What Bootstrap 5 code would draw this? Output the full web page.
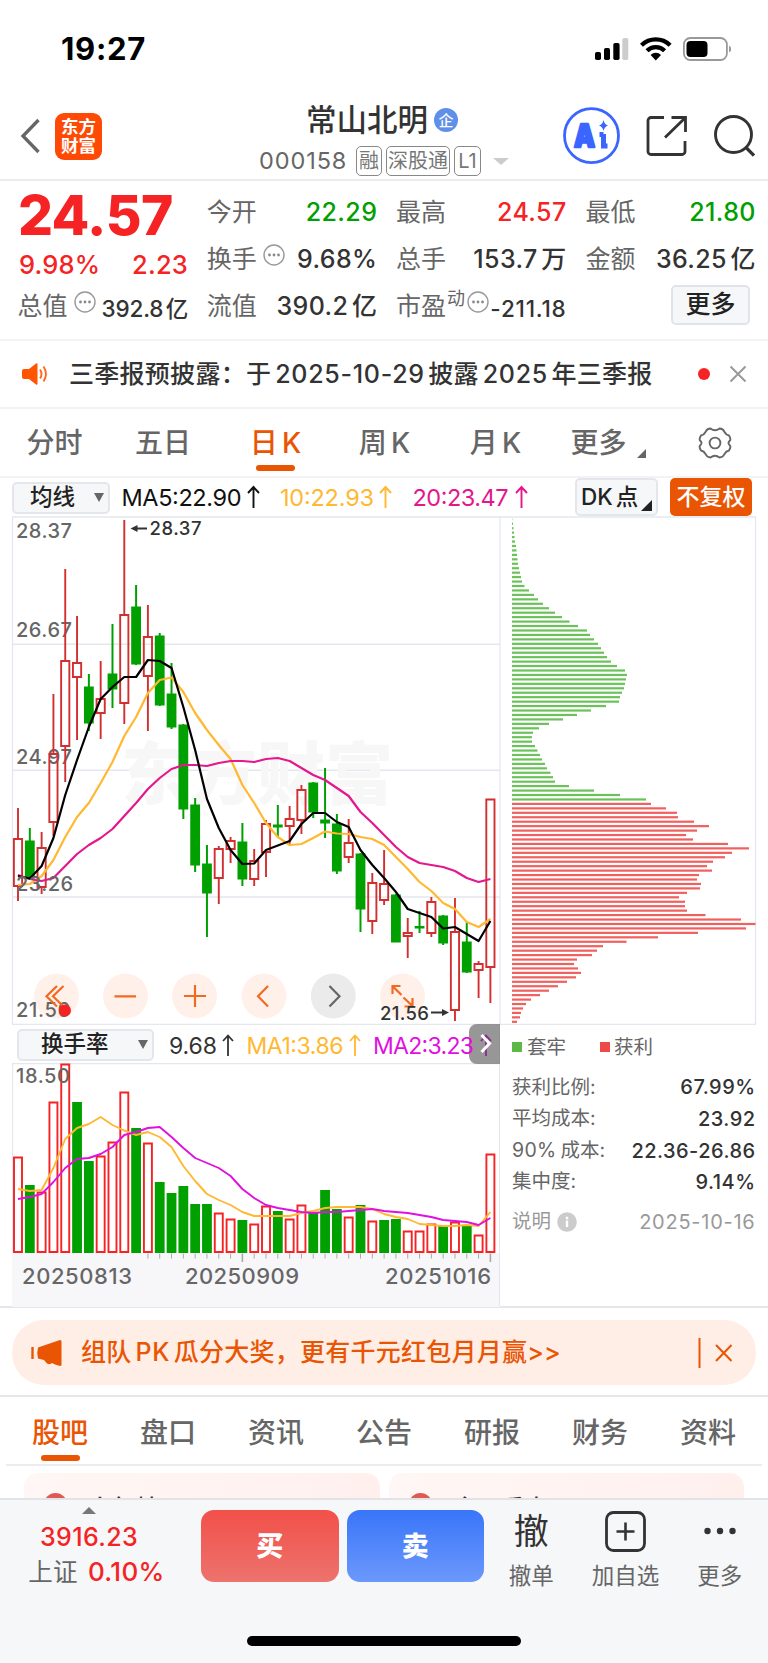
<!DOCTYPE html>
<html lang="zh-CN">
<head>
<meta charset="utf-8">
<meta name="viewport" content="width=device-width, initial-scale=1">
<title>常山北明 000158</title>
<link href="https://cdn.jsdelivr.net/npm/bootstrap@5.3.0/dist/css/bootstrap.min.css" rel="stylesheet">
<style>
:root{--ink:#333;--sub:#666;--up:#f52323;--down:#00a000;--brand:#ea5504;--line:#e9e9ee}
body{width:768px;height:1663px;overflow:hidden;background:#fff;color:var(--ink);font-family:Inter,"Noto Sans CJK SC",sans-serif;font-size:25px;line-height:1;font-weight:500;white-space:nowrap}
svg{display:block;flex:none}
.c-sub{color:var(--sub);font-weight:400}.c-up{color:var(--up)}.c-down{color:var(--down)}
.statusbar{height:97px;padding:0 37px 0 61px}
.clock{font-size:31px;font-weight:700;color:#000;letter-spacing:.7px}
.topbar{height:84px;border-bottom:2px solid #ececee;padding:0 12px 0 20px}
.side-l{flex:none;width:239px}.side-r{flex:none;width:256px;padding-left:63px}
.mid{flex:none;width:241px}
.brandmark{width:47px;height:47px;border-radius:9px;background:#ff4a05;color:#fff;font-size:17.5px;line-height:19px;font-weight:700;margin-left:14px}
.title{font-size:30.5px;height:42px;padding:4px 0 0 47px}
.ent{width:24px;height:24px;border-radius:50%;background:#5f8fe8;color:#fff;font-size:15px;margin-left:6px}
.code{font-size:23.5px;letter-spacing:.9px;color:#666;font-weight:400;width:97px}
.codeline{padding:7px 0 0 0}
.codeline>*{flex:none}
.mk{border:1.5px solid #888;border-radius:5px;height:30px;font-size:20px;color:#777;font-weight:400;margin-right:4px;display:flex;align-items:center;justify-content:center}
.mk-1{width:26px}.mk-3{width:64px}.mk-l{width:27px}
.tri-d{border:8px solid transparent;border-top:7px solid #ccc;border-bottom:0}
.quote{height:160px;border-bottom:2px solid #f3f3f5;padding:8px 12px 0 19px;display:grid;grid-template-columns:repeat(4,169px);column-gap:20.3px}
.quote .ln{height:47px;display:flex;align-items:center;justify-content:space-between;letter-spacing:.4px}
.quote .ln>.c-sub{letter-spacing:0;margin-left:-1.5px}
.quote .dots{margin:0 auto 9px 6px}
.quote .unit{margin-left:3.5px}
.big{font-size:55px;font-weight:800;height:52px;letter-spacing:-.6px;margin-left:-1px}
.pct{height:42px;padding-top:6px;font-size:25.5px;letter-spacing:.2px}
.quote .sm{font-size:22.5px;letter-spacing:-.2px;padding-top:6px}
.quote .sm .unit{margin-left:2.5px}
.quote .sm-w{letter-spacing:.8px}
.more{width:79px;height:40px;border:2px solid #e1e3ea;border-radius:5px;background:#f6f7f9;color:#222;margin:0 6px 4px 0;letter-spacing:0}
.quote .ln>.sup{font-size:18px;margin:-16px 0 0 1px}
.quote .ln>.sup+.dots{margin-left:2px}
.notice{height:68px;border-bottom:2px solid #f3f3f5;padding:0 20px 0 21px}
.notice .msg{margin-left:20px;width:624px;letter-spacing:.28px}
.msg b{font-weight:500;letter-spacing:.7px;margin:0 3.5px 0 4px}
.tabbar{height:69px;font-size:28px;border-bottom:2px solid #f3f3f5}
.tb{position:relative;height:67px;display:flex;align-items:center;justify-content:center;color:#666}
.tb i{font-style:normal;margin-left:4px}
.tb.on{color:var(--brand)}
.tb.on::after{content:"";position:absolute;bottom:5px;left:50%;width:39px;height:6px;margin-left:-19.5px;border-radius:3px;background:var(--brand)}
.ktabs .tb{padding-top:1px}
.k1{width:109px}.k2{width:108px}.k3{width:117px}.k4{width:101px}.k5{width:121px}.k6{width:85px}
.ktri{margin:21px 0 0 -4px}.gear{margin-left:52px}
.inds{height:38px;font-size:23px;font-weight:400;padding:0 16px 0 12px}
.sel{height:32px;border:2px solid #e4e6ec;border-radius:5px;background:#f6f7f9;color:#222;font-size:22.5px;font-weight:500;margin-top:1px}
.sel-ma{width:98px;padding:0 4px 0 16px}.sel-to{width:137px;padding:0 4px 0 22px}
.sel .d{border:5px solid transparent;border-top:9px solid #666;border-bottom:0}
.dk{position:relative;width:83px;height:38px;border:2px solid #e4e6ec;border-radius:5px;background:#f6f7f9;font-size:22.5px;font-weight:500;padding-left:4px;color:#222}
.dk b{font-weight:500;margin-right:3px}
.dk::after{content:"";position:absolute;right:4px;bottom:3px;border-left:11px solid transparent;border-bottom:11px solid #222}
.fq{width:82px;height:38px;border-radius:5px;background:var(--brand);color:#fff;font-size:23px;font-weight:500;margin-left:12px}
.lower{height:283px;border-bottom:2px solid #e6e6ea;padding-left:12px}
.lower-l{width:488px}
.inds2{height:38px;font-size:23px;font-weight:400;position:relative;padding-left:5px}
.tab-next{position:absolute;right:0;top:-1px;width:31px;height:40px;border-radius:8px 0 0 8px;background:rgba(125,125,125,.8)}
.chips{width:268px;padding:6.5px 11.5px 0 12px;font-size:19.5px;border-left:1px solid #e4e6ec;margin-left:-1px}
.chips .ln{height:31.6px;display:flex;align-items:center;justify-content:space-between}
.chips .key{justify-content:flex-start;margin-bottom:8.5px}
.key-a{width:73px}
.chips .num{font-size:20px;letter-spacing:.45px}
.chips .foot{font-weight:400;margin-top:8px;color:#999}
.chips .foot .num{letter-spacing:.75px}
.chips b{font-weight:400;margin-right:4px;letter-spacing:.3px}
.sq{width:10px;height:10px;margin-right:5px;background:#5cb947}
.sq-r{background:#ee4a4a;margin-right:4px}
.promo-wrap{height:89px;border-bottom:2px solid #e6e6ea;padding:12px 12px 0}
.promo{height:65px;border-radius:32px;background:#feeee6;color:var(--brand);padding:0 24px 0 19px}
.promo .msg{letter-spacing:.25px;width:619px;margin-left:19px}
.btabs{height:69px;margin:0 6px;border-bottom:2px solid #ededf0}
.btabs .tb{width:108.1px;padding-top:4px}
.btabs .tb.on::after{bottom:3px}
.feeds{height:32px;padding:7px 24px 0;gap:9px;overflow:hidden}
.feed{width:355.5px;height:60px;border-radius:14px;background:linear-gradient(90deg,#fff7f5,#fff0ee);padding:20px 0 0 20px;font-size:24px}
.pin{width:23px;height:23px;border-radius:50%;background:#e05a55;margin-right:21px}
.dock{height:165px;background:#f6f7f9;border-top:2px solid #e2e3e6}
.dockrow{height:101px}
.idx{width:178px;font-size:25px;letter-spacing:.35px}
.idx svg{margin-top:7px}
.idx-v{margin-top:11px}
.idx-p{margin:9px 0 0 15px;font-size:26px}
.idx-p .c-sub{margin-right:10px;font-size:24.5px}
.trade{width:137.5px;height:72px;border-radius:13px;margin:10px 8px 0 0;color:#fff;font-size:27px;font-weight:900}
.buy{background:linear-gradient(#f25049,#ed736d);margin-left:23px}.sell{background:linear-gradient(#3975f9,#6c98fc);margin-right:0}
.act{font-size:22.5px;color:#666;font-weight:400;width:94.3px;text-align:center}
.act .pic{height:62px;color:#333;margin-bottom:3px;font-size:35px}
.home{width:274px;height:10px;border-radius:5px;background:#000;margin:35px auto 0}
</style>
</head>
<body>
<header>
  <div class="statusbar d-flex align-items-center justify-content-between">
    <span class="clock">19:27</span>
    <svg width="136" height="24" viewBox="595 37 136 24">
      <rect x="595" y="52" width="6" height="8" rx="1.8"/><rect x="604" y="48" width="6" height="12" rx="1.8"/><rect x="613.3" y="43" width="6.3" height="17" rx="1.8"/><rect x="622.3" y="38" width="6" height="22" rx="1.8" fill="#ccc"/>
      <g fill="none" stroke="#000" stroke-width="4.3"><path d="M641.5 45.2a20.5 20.5 0 0 1 28.6 0"/><path d="M647 50.8a12.5 12.5 0 0 1 17.6 0"/></g><path d="M655.8 60.5l-5.2-5.600a7.6 7.6 0 0 1 10.4 0z"/>
      <rect x="683.9" y="38" width="43" height="22" rx="6.5" fill="none" stroke="#999" stroke-width="1.8"/><rect x="686.5" y="41" width="21" height="16" rx="4"/><path d="M729 45.500q5 3.500 0 7z" fill="#999"/>
    </svg>
  </div>
  <div class="topbar d-flex">
    <div class="side-l d-flex align-items-center pb-1">
      <svg width="21" height="36" viewBox="0 0 21 36"><path d="M18.500 2L3 18l15.500 16" fill="none" stroke="#666" stroke-width="3.300"/></svg>
      <div class="brandmark d-flex flex-column justify-content-center align-items-center"><span>东方</span><span>财富</span></div>
    </div>
    <div class="mid">
      <div class="title d-flex align-items-center"><span>常山北明</span><span class="ent d-flex align-items-center justify-content-center">企</span></div>
      <div class="codeline d-flex align-items-center"><span class="code">000158</span><span class="mk mk-1">融</span><span class="mk mk-3">深股通</span><span class="mk mk-l">L1</span><span class="tri-d ms-2"></span></div>
    </div>
    <div class="side-r d-flex">
      <svg width="192" height="78" viewBox="564 97 192 78" fill="none">
        <circle cx="592.500" cy="135.700" r="27" stroke="#3a66ff" stroke-width="2.800"/>
        <text x="575" y="147" font-size="31" font-weight="900" fill="#3a66ff" stroke="#3a66ff" stroke-width="2.400" stroke-linejoin="round" textLength="21" lengthAdjust="spacingAndGlyphs">A</text>
        <path d="M604.500 134v14M600.500 134.500h4M602 146h6.500" stroke="#3a66ff" stroke-width="5"/><path d="M604.500 120q1 4.500 4.500 5.500-3.500 1-4.500 5.500-1-4.500-4.500-5.500 3.500-1 4.500-5.500z" fill="#3a66ff"/>
        <path d="M665 117.500h-13a3 3 0 0 0-3 3v31a3 3 0 0 0 3 3h31a3 3 0 0 0 3-3V141M672.500 117.500h14V132M686 118l-20 19.500" stroke="#333" stroke-width="2.800"/>
        <circle cx="734.500" cy="134.500" r="18" stroke="#333" stroke-width="2.900"/><path d="M747 147.500l8 8" stroke="#333" stroke-width="3.200"/>
      </svg>
    </div>
  </div>
</header>

<section class="quote">
  <div>
    <div class="big c-up d-flex align-items-center">24.57</div>
    <div class="pct c-up d-flex align-items-center justify-content-between"><span>9.98%</span><span>2.23</span></div>
    <div class="ln"><span class="c-sub">总值</span><svg class="dots" width="22" height="22" viewBox="0 0 22 22"><circle cx="11" cy="11" r="10" fill="none" stroke="#999" stroke-width="1.400"/><g fill="#888"><circle cx="6.500" cy="11" r="1.400"/><circle cx="11" cy="11" r="1.400"/><circle cx="15.500" cy="11" r="1.400"/></g></svg><span class="sm">392.8<span class="unit">亿</span></span></div>
  </div>
  <div>
    <div class="ln"><span class="c-sub">今开</span><span class="c-down">22.29</span></div>
    <div class="ln"><span class="c-sub">换手</span><svg class="dots" width="22" height="22" viewBox="0 0 22 22"><circle cx="11" cy="11" r="10" fill="none" stroke="#999" stroke-width="1.400"/><g fill="#888"><circle cx="6.500" cy="11" r="1.400"/><circle cx="11" cy="11" r="1.400"/><circle cx="15.500" cy="11" r="1.400"/></g></svg><span>9.68%</span></div>
    <div class="ln"><span class="c-sub">流值</span><span>390.2<span class="unit">亿</span></span></div>
  </div>
  <div>
    <div class="ln"><span class="c-sub">最高</span><span class="c-up">24.57</span></div>
    <div class="ln"><span class="c-sub">总手</span><span>153.7<span class="unit">万</span></span></div>
    <div class="ln"><span class="c-sub">市盈</span><span class="c-sub sup">动</span><svg class="dots" width="22" height="22" viewBox="0 0 22 22"><circle cx="11" cy="11" r="10" fill="none" stroke="#999" stroke-width="1.400"/><g fill="#888"><circle cx="6.500" cy="11" r="1.400"/><circle cx="11" cy="11" r="1.400"/><circle cx="15.500" cy="11" r="1.400"/></g></svg><span class="sm sm-w">-211.18</span></div>
  </div>
  <div>
    <div class="ln"><span class="c-sub">最低</span><span class="c-down">21.80</span></div>
    <div class="ln"><span class="c-sub">金额</span><span>36.25<span class="unit">亿</span></span></div>
    <div class="ln justify-content-end"><span class="more d-flex align-items-center justify-content-center">更多</span></div>
  </div>
</section>

<section class="notice d-flex align-items-center">
  <svg width="28" height="24" viewBox="0 0 28 24"><path d="M1 9q0-2 2-2h5l7-5.500q1.500-.8 1.500 1v19q0 1.800-1.500 1L8 17H3q-2 0-2-2z" fill="#ff5500"/><path d="M19 7.500q3 4.500 0 9M22.500 4.500q5 7.500 0 15" fill="none" stroke="#ff6a20" stroke-width="1.900"/></svg>
  <span class="msg">三季报预披露：于<b>2025-10-29</b>披露<b>2025</b>年三季报</span>
  <svg width="57" height="20" viewBox="-1 0 57 20"><circle cx="12" cy="10" r="6" fill="#f52323"/><path d="M38.500 2.500l15 15M53.500 2.500l-15 15" stroke="#999" stroke-width="2"/></svg>
</section>

<nav class="tabbar ktabs d-flex align-items-center">
  <span class="tb k1">分时</span><span class="tb k2">五日</span><span class="tb k3 on">日<i>K</i></span><span class="tb k4">周<i>K</i></span><span class="tb k5">月<i>K</i></span><span class="tb k6">更多</span>
  <svg class="ktri" width="9" height="9" viewBox="0 0 9 9"><path d="M9 0v9H0z" fill="#666"/></svg>
  <svg class="gear" width="34" height="34" viewBox="-17 -17 34 34"><path d="M-4.500-14.500Q0-11 4.500-14.500Q8-14.500 9.500-11Q11-8 14-7.500Q16.500-3.500 14.500-2Q12.500 0 14.500 2Q16.500 3.500 14 7.500Q11 8 9.500 11Q8 14.500 4.500 14.500Q0 11-4.500 14.500Q-8 14.500-9.500 11Q-11 8-14 7.500Q-16.500 3.500-14.500 2Q-12.500 0-14.500-2Q-16.500-3.500-14-7.500Q-11-8-9.500-11Q-8-14.500-4.500-14.500Z" fill="none" stroke="#666" stroke-width="1.900"/><circle r="5.400" fill="none" stroke="#666" stroke-width="1.900"/></svg>
</nav>

<div class="inds d-flex align-items-center">
  <span class="sel sel-ma d-flex align-items-center justify-content-between">均线<i class="d"></i></span>
  <svg width="450" height="38" viewBox="110 478 450 38" font-size="23.500">
    <text x="121.500" y="506" textLength="120" fill="#111">MA5:22.90</text>
    <text x="280" y="506" textLength="94" fill="#ffb830">10:22.93</text>
    <text x="412.500" y="506" textLength="96" fill="#e4188c">20:23.47</text>
    <g fill="none" stroke-width="1.900"><path d="M253.500 508v-21M248 493l5.500-6 5.500 6" stroke="#111"/><path d="M385.500 508v-21M380 493l5.500-6 5.500 6" stroke="#ffb830"/><path d="M521.500 508v-21M516 493l5.500-6 5.500 6" stroke="#e4188c"/></g>
  </svg>
  <span class="dk d-flex align-items-center ms-auto"><b>DK</b>点</span><span class="fq d-flex align-items-center justify-content-center">不复权</span>
</div>

<svg width="768" height="509" viewBox="0 516 768 509">
  <g stroke="#e4e8ee" fill="none"><path d="M12.500 516V1025M500 516.500V1025M755.500 517V1025" stroke-width="1.300"/><path d="M12 517H756M12 1024.500H756M12 644.200H500M12 770.200H500M12 897H500" stroke-width="1.500"/></g>
  <text x="121" y="799" font-size="68" font-weight="900" fill="#f7f7f7" textLength="272">东方财富</text>
  <g font-size="20" fill="#666"><text x="16" y="538" textLength="56">28.37</text><text x="16" y="637" textLength="56">26.67</text><text x="16" y="764" textLength="56">24.97</text></g>
  <g><circle cx="56.500" cy="996" r="22.500" fill="#fff0ea"/><circle cx="125.500" cy="996" r="22.500" fill="#fff0ea"/><circle cx="194.500" cy="996" r="22.500" fill="#fff0ea"/><circle cx="264" cy="996" r="22.500" fill="#fff0ea"/><circle cx="333.300" cy="996" r="22.500" fill="#ebebeb"/><circle cx="402.500" cy="996" r="22.500" fill="#fff0ea"/></g>
  <g id="candles"></g>
  <g id="kma" fill="none" stroke-width="2.200"></g>
  <text x="16" y="891" font-size="20" fill="#666" textLength="57">23.26</text><text x="16" y="1017" font-size="20" fill="#666" textLength="54">21.56</text>
  <g fill="none" stroke="#f26a21" stroke-width="2.200"><path d="M57 986l-10.500 10.300L57 1006.500M63.500 986L53 996.300l10.500 10.200M114.500 996.300h21.500M184 996h22M195 985v22M268 986l-10 10.300 10 10.200"/><path d="M329.500 986l10 10.300-10 10.200" stroke="#666"/><path d="M392.500 994v-8h8M392.500 986l9 9M412.500 998v8.500h-8M412.500 1006l-9-8.500"/></g>
  <circle cx="65" cy="1010.500" r="6" fill="#f52323"/>
  <g fill="#333" font-size="18.500"><text x="149.500" y="535" textLength="52">28.37</text><text x="380" y="1020" textLength="49">21.56</text><path d="M147 528.500H136M431 1012.500h14" stroke="#333" stroke-width="1.800"/><path d="M130.500 528.500l7-3.500v7zM449 1012.500l-7-3.500v7z"/></g>
  <g id="chipbars"></g>
</svg>

<section class="lower d-flex">
  <div class="lower-l">
    <div class="inds2 d-flex align-items-center">
      <span class="sel sel-to d-flex align-items-center justify-content-between">换手率<i class="d"></i></span>
      <span class="tab-next"></span>
      <svg class="position-relative" width="346" height="38" viewBox="154 1025 346 38" font-size="23">
        <text x="169" y="1053.500" fill="#333" textLength="48">9.68</text><text x="246.500" y="1053.500" fill="#ffb830" textLength="97">MA1:3.86</text><text x="373" y="1053.500" fill="#e010e0" textLength="101">MA2:3.23</text>
        <g fill="none" stroke-width="1.800"><path d="M228 1056v-20M223 1041l5-5.500 5 5.500" stroke="#333"/><path d="M355 1056v-20M350 1041l5-5.500 5 5.500" stroke="#ffb830"/><path d="M486 1056v-20M481 1041l5-5.500 5 5.500" stroke="#8b2a8b"/></g>
        <path d="M481.500 1035l8 8.500-8 8.500" fill="none" stroke="#fff" stroke-width="3"/>
      </svg>
    </div>
    <svg width="488" height="244" viewBox="12 1063 488 244">
      <rect x="12" y="1253" width="488" height="54" fill="#f7f7fa"/>
      <path d="M12 1063.500H500M12.500 1063V1253" stroke="#e4e8ee" stroke-width="1.300"/>
      <g id="vol"></g>
      <text x="16" y="1083" font-size="20" fill="#666" textLength="54">18.50</text>
      <g id="vma" fill="none" stroke-width="1.900"></g>
      <g font-size="22" fill="#666"><text x="22" y="1284" textLength="110">20250813</text><text x="185" y="1284" textLength="114">20250909</text><text x="385" y="1284" textLength="106">20251016</text></g>
    </svg>
  </div>
  <div class="chips">
    <div class="ln key c-sub"><span class="sq"></span><span class="key-a">套牢</span><span class="sq sq-r"></span>获利</div>
    <div class="ln"><span class="c-sub">获利比例:</span><span class="num">67.99%</span></div>
    <div class="ln"><span class="c-sub">平均成本:</span><span class="num">23.92</span></div>
    <div class="ln"><span class="c-sub"><b>90%</b>成本:</span><span class="num">22.36-26.86</span></div>
    <div class="ln"><span class="c-sub">集中度:</span><span class="num">9.14%</span></div>
    <div class="ln foot"><span class="d-flex align-items-center">说明<svg width="26" height="20" viewBox="-6 0 26 20"><circle cx="10" cy="10" r="9.800" fill="#ccc"/><path d="M10 8.500V15M10 4.700v2.600" stroke="#fff" stroke-width="2.400"/></svg></span><span class="num">2025-10-16</span></div>
  </div>
</section>

<section class="promo-wrap">
  <div class="promo d-flex align-items-center">
    <svg width="31" height="28" viewBox="0 0 31 28"><path d="M1.500 8v12" stroke="#ea5504" stroke-width="2.400"/><path d="M7 8.500L29 1q1.500 0 1.500 1.500v23q0 1.500-1.500 1.500l-5-1.500-3-1.500q-2 2-5 .5L13 21 7 19.500q-1.500-5.500 0-11z" fill="#ea5504"/></svg>
    <span class="msg">组队<b>PK</b>瓜分大奖，更有千元红包月月赢&gt;&gt;</span>
    <svg width="34" height="32" viewBox="698 1336 34 32"><path d="M699.500 1337v30M716 1344l15.500 16M731.500 1344L716 1360" stroke="#ea5504" stroke-width="2"/></svg>
  </div>
</section>

<nav class="tabbar btabs d-flex"><span class="tb on">股吧</span><span class="tb">盘口</span><span class="tb">资讯</span><span class="tb">公告</span><span class="tb">研报</span><span class="tb">财务</span><span class="tb">资料</span></nav>

<section class="feeds d-flex">
  <div class="feed d-flex"><span class="pin"></span><span class="pt-1">人气榜</span></div>
  <div class="feed d-flex"><span class="pin"></span><span class="pt-1">今日看点</span></div>
</section>

<footer class="dock">
  <div class="dockrow d-flex">
    <div class="idx d-flex flex-column align-items-center">
      <svg width="14" height="7" viewBox="0 0 14 7"><path d="M7 0l7 7H0z" fill="#777"/></svg>
      <span class="idx-v c-up">3916.23</span>
      <span class="idx-p c-up d-flex align-items-center"><span class="c-sub">上证</span>0.10%</span>
    </div>
    <div class="trade buy d-flex align-items-center justify-content-center">买</div>
    <div class="trade sell d-flex align-items-center justify-content-center">卖</div>
    <div class="act"><div class="pic d-flex align-items-center justify-content-center">撤</div>撤单</div>
    <div class="act"><div class="pic d-flex align-items-center justify-content-center"><svg width="41" height="41" viewBox="0 0 41 41"><path d="M20.500 11.500v18M11.500 20.500h18" stroke="#333" stroke-width="2.600"/><rect x="1.500" y="1.500" width="38" height="38" rx="7" fill="none" stroke="#333" stroke-width="2.800"/></svg></div>加自选</div>
    <div class="act"><div class="pic d-flex align-items-center justify-content-center"><svg width="32" height="8" viewBox="0 0 32 8"><g fill="#333"><circle cx="3.500" cy="4" r="3.200"/><circle cx="16" cy="4" r="3.200"/><circle cx="28.500" cy="4" r="3.200"/></g></svg></div>更多</div>
  </div>
  <div class="home"></div>
</footer>

<script src="https://cdn.jsdelivr.net/npm/bootstrap@5.3.0/dist/js/bootstrap.bundle.min.js"></script>
<script>
const X = i => 18 + 11.81 * i;
const el = (id, html) => document.getElementById(id).innerHTML = html;
// r = rising day, g = falling day: high, top of body, bottom of body, low
const days = `r808,839,886,901 g828,841,878,880 r832,848,887,894 r694,754,822,836 r569,661,746,782 r616,663,677,740 g674,687,723,731 r661,699,713,739 g624,674,689,708 r520,615,703,724 g585,607,664,665 r605,637,676,731 g633,636,705,706 g663,694,727,729 g724,725,809,819 g798,805,865,872 g845,864,893,937 r846,849,878,904 r837,841,849,863 g823,842,879,886 r849,861,879,886 r820,824,852,877 g805,825,827,837 r806,819,826,844 r785,790,820,834 g782,783,812,818 g768,820,823,838 g814,824,871,874 r819,843,857,863 g853,854,909,932 r873,883,921,934 r850,884,900,905 g894,895,942,942 r918,933,936,958 g911,926.5,928,933 r897,902,933,937 g915,916,943,945 r898,932,1010,1021 g922,942,972,973 r961,964,970,998 r799,799.5,967,1003`.split(' ');
el('candles', days.map((s, i) => {
  const [h, t, b, l] = s.slice(1).split(',').map(Number), x = X(i), up = s[0] === 'r', c = up ? '#d23030' : '#00a000';
  return up
    ? `<path d="M${x} ${h}V${t}M${x} ${b}V${l}M${x - 4.1} ${t}h8.2V${b}h-8.2z" fill="none" stroke="${c}" stroke-width="1.9"/>`
    : `<path d="M${x} ${h}V${l}" stroke="${c}" stroke-width="2"/><rect x="${x - 4.9}" y="${t - .5}" width="9.8" height="${b - t + 1}" fill="${c}"/>`;
}).join(''));
const line = (a, c) => `<polyline stroke="${c}" stroke-linejoin="round" points="${a.map((y, i) => X(i) + ',' + y).join(' ')}"/>`;
el('kma',
  line([885,884,876,860,837,817,803,783,762,736,717,693,680,677.5,692,713,730,745,759,785,803,823,837,845,844,838,831.5,833.5,834,837,839,845,857,869,882,891,903,909,922,927,919], '#ffb830') +
  line([875,879,881,878,866,854,845,838,829,816,803,789,778,769,765,765,766,763,761,761,762,759,758,761,768,775,780,788,796,812,823,835,847,857,863,865,867,871,878,882,879], '#e4188c') +
  line([876,878.5,866,838,795,760,727,699,687,677,677,660,661,668,707,750,799,828,850,864,863.5,850,845.5,841,824,813,813,822,827,850,865,878,892,909,913,917,928.5,927,934,941,921], '#000'));
const chips = [.3,1,1.5,2,2.5,3,4,4.5,5,5.5,6,7,8,9,10,12.5,17,22,26,31,37,43,50,57.5,66,75,78,82,86,89,92,95,99,105,113,115,114,113,112,110,108,107,94,79,65,51,37,27,21,20,20,23,25.5,28,30,33,35,38.5,41,43,57,82,108,134,139,154,165,166,182,197,185,174,181,216,237,220,213,201,195,200,187,185,189,188,175,167,173,173,175,193.5,229,243.5,234,186,146,114.5,91,85,80,65,62,66,69,64,55,46,37,28,19,14,11,9,8,5];
el('chipbars', chips.map((w, k) => `<rect x="512" y="${(518.2 + 4.447 * k).toFixed(2)}" width="${w}" height="2.2" fill="${k < 64 ? '#6cc25a' : '#f0605f'}"/>`).join(''));
const vols = [1157,1185,1192,1102,1064,1102,1161,1156,1142,1092,1128,1143,1182,1193,1186,1204,1204,1213,1219,1220,1224,1206,1211,1219,1205,1212,1190,1209,1217,1205,1221,1220,1219,1231,1231,1224,1225,1222,1226,1235,1154];
const vcol = 'rgrrrggrrrgrgggggrrgrrgrrgggrgrggrrrgrgrr';
el('vol', vols.map((t, i) => (vcol[i] === 'r'
  ? `<path d="M${X(i) - 4} ${t + .5}h8V1252h-8z" fill="none" stroke="#f52323" stroke-width="1.9"/>`
  : `<rect x="${X(i) - 4.9}" y="${t}" width="9.8" height="${1253 - t}" fill="#00a000"/>`) +
  (i > 10 ? `<path d="M${X(i)} 1253.5V${i === 19 || i === 40 ? 1262 : 1258.5}" stroke="#aaa" stroke-width="${i === 19 || i === 40 ? 1.6 : 1}"/>` : '')).join(''));
el('vma',
  line([1189,1191,1190,1168,1139,1128,1124,1117,1125,1130.5,1135,1132,1137,1147,1166,1181,1194,1200,1205,1212,1216,1216,1216,1216,1213,1211,1208,1207,1207,1207,1209,1214,1217,1219,1224,1225,1226,1226,1225,1226,1212], '#ffb830') +
  line([1199,1197,1194,1182,1168,1159,1158,1154,1147,1135,1132,1128,1127,1137,1148,1158,1163,1168,1176,1189,1198,1205,1208,1210,1212,1213,1212,1212,1211,1210,1209,1211,1212,1213,1215,1217,1220,1221,1222,1225,1218], '#e010e0'));
</script>
</body>
</html>
